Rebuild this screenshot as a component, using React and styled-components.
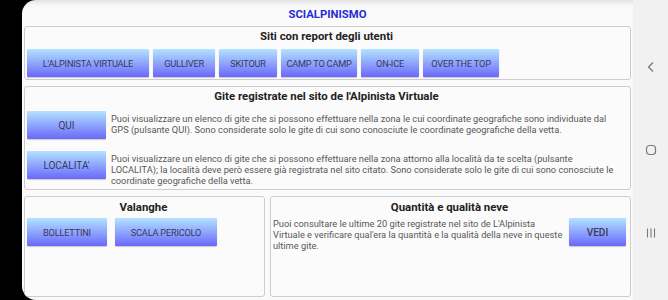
import styled, { createGlobalStyle } from 'styled-components';

const Global = createGlobalStyle`
  html, body {
    margin: 0;
    padding: 0;
    background: #000;
  }
  body {
    font-family: Roboto, "Liberation Sans", sans-serif;
  }
`;

const Frame = styled.div`
  display: flex;
  width: 668px;
  height: 300px;
  background: #000;
  overflow: hidden;
`;

const Screen = styled.div`
  margin-left: 22px;
  flex: 1;
  display: flex;
  background: #fafafa;
  border-radius: 14px 0 0 14px;
  overflow: hidden;
`;

const Content = styled.main`
  flex: 1;
  display: flex;
  flex-direction: column;
  gap: 6px;
  padding: 0 2px 3px 2px;
  box-shadow: inset 0 7px 6px -5px rgba(0, 0, 0, 0.13);
`;

const Header = styled.h1`
  margin: 0;
  height: 20px;
  padding-top: 9px;
  box-sizing: border-box;
  font-size: 11.3px;
  line-height: 12px;
  font-weight: 700;
  color: #2b2bd6;
  text-align: center;
`;

const Panel = styled.section`
  box-sizing: border-box;
  height: ${(p) => p.$h || 'auto'};
  border: 1px solid #cdcdcd;
  border-radius: 3px;
  background: #fbfbfb;
  padding: ${(p) => p.$pad || '3px 4px 3px 2px'};
  display: flex;
  flex-direction: column;
`;

const Title = styled.h2`
  margin: 0 0 ${(p) => p.$after || '7px'};
  font-size: 11.4px;
  line-height: 12px;
  font-weight: 700;
  color: #222;
  text-align: center;
`;

const ButtonRow = styled.div`
  display: flex;
  gap: ${(p) => p.$gap || '4px'};
`;

const Button = styled.button`
  box-sizing: border-box;
  height: 28px;
  width: ${(p) => p.$w || 'auto'};
  padding: 0 4px;
  border: none;
  border-radius: 1px;
  background: linear-gradient(#b3e3ff, #6a68fb);
  box-shadow: 0 1px 1px rgba(0, 0, 0, 0.2);
  font-family: Roboto, "Liberation Sans", sans-serif;
  font-size: ${(p) => p.$size || '9.2px'};
  font-weight: ${(p) => (p.$bold ? 500 : 400)};
  color: #39395c;
  letter-spacing: ${(p) => p.$ls || '-0.2px'};
  white-space: nowrap;
  flex-shrink: 0;
  cursor: pointer;
`;

const Rows = styled.div`
  display: flex;
  flex-direction: column;
  gap: 12px;
`;

const InfoRow = styled.div`
  display: flex;
  align-items: flex-start;
  gap: 5px;
`;

const Info = styled.p`
  margin: 0;
  padding-top: ${(p) => p.$top || '2px'};
  font-size: 9.25px;
  line-height: 11px;
  color: #585858;
`;

const Bottom = styled.div`
  display: grid;
  grid-template-columns: 241px 1fr;
  gap: 5px;
  flex: 1;
`;

const NavBar = styled.nav`
  width: 35px;
  background: #f1f1f1;
  display: flex;
  flex-direction: column;
  align-items: center;
  justify-content: center;
  gap: 71px;
`;

const NavIcon = styled.svg`
  width: 12px;
  height: 12px;
  color: #7a7a7a;
`;

const sites = [
  ["L'ALPINISTA VIRTUALE", '122px'],
  ['GULLIVER', '62px'],
  ['SKITOUR', '58px'],
  ['CAMP TO CAMP', '76px'],
  ['ON-ICE', '58px'],
  ['OVER THE TOP', '76px'],
];

export default function App() {
  return (
    <>
      <Global />
      <Frame>
        <Screen>
          <Content>
            <Header>SCIALPINISMO</Header>

            <Panel $h="54px">
              <Title $after="7px">Siti con report degli utenti</Title>
              <ButtonRow>
                {sites.map(([name, w]) => (
                  <Button key={name} $w={w}>{name}</Button>
                ))}
              </ButtonRow>
            </Panel>

            <Panel $h="104px">
              <Title $after="9px">Gite registrate nel sito de l'Alpinista Virtuale</Title>
              <Rows>
                <InfoRow>
                  <Button $w="79px" $size="10px" $ls="0">QUI</Button>
                  <Info>
                    Puoi visualizzare un elenco di gite che si possono effettuare nella zona le cui coordinate geografiche sono individuate dal GPS (pulsante QUI). Sono considerate solo le gite di cui sono conosciute le coordinate geografiche della vetta.
                  </Info>
                </InfoRow>
                <InfoRow>
                  <Button $w="79px" $size="10px" $ls="0">LOCALITA'</Button>
                  <Info>
                    Puoi visualizzare un elenco di gite che si possono effettuare nella zona attorno alla località da te scelta (pulsante<br />
                    LOCALITA); la località deve però essere già registrata nel sito citato. Sono considerate solo le gite di cui sono conosciute le coordinate geografiche della vetta.
                  </Info>
                </InfoRow>
              </Rows>
            </Panel>

            <Bottom>
              <Panel $pad="4px 4px 3px 2px">
                <Title $after="5px">Valanghe</Title>
                <ButtonRow $gap="8px">
                  <Button $w="80px">BOLLETTINI</Button>
                  <Button $w="102px">SCALA PERICOLO</Button>
                </ButtonRow>
              </Panel>
              <Panel $pad="4px 4px 3px 2px">
                <Title $after="5px">Quantità e qualità neve</Title>
                <InfoRow>
                  <Info $top="0">
                    Puoi consultare le ultime 20 gite registrate nel sito de L'Alpinista Virtuale e verificare qual'era la quantità e la qualità della neve in queste ultime gite.
                  </Info>
                  <Button $w="57px" $size="10px" $ls="0" $bold>VEDI</Button>
                </InfoRow>
              </Panel>
            </Bottom>
          </Content>

          <NavBar>
            <NavIcon viewBox="0 0 12 12" fill="none" stroke="currentColor" strokeWidth="1.3">
              <path d="M8 1.5 L3.5 6 L8 10.5" />
            </NavIcon>
            <NavIcon viewBox="0 0 12 12" fill="none" stroke="currentColor" strokeWidth="1.2">
              <rect x="1.5" y="1.5" width="9" height="9" rx="3" />
            </NavIcon>
            <NavIcon viewBox="0 0 12 12" fill="none" stroke="currentColor" strokeWidth="1.1">
              <path d="M2.5 1.5 V10.5 M6 1.5 V10.5 M9.5 1.5 V10.5" />
            </NavIcon>
          </NavBar>
        </Screen>
      </Frame>
    </>
  );
}
